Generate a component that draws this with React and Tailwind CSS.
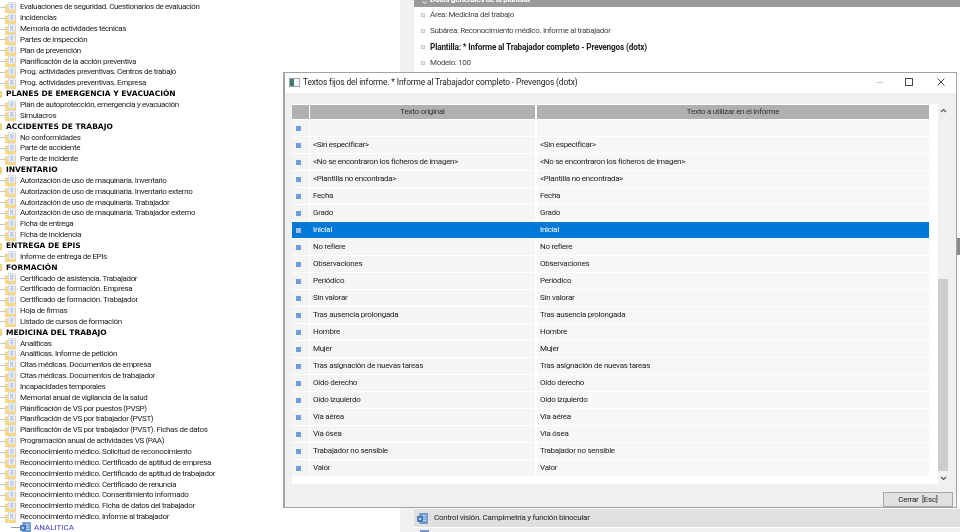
import React from 'react';

// h = section heading, everything else is a report leaf
const treeRows = [
  'Evaluaciones de seguridad. Cuestionarios de evaluación',
  'Incidencias',
  'Memoria de actividades técnicas',
  'Partes de inspección',
  'Plan de prevención',
  'Planificación de la acción preventiva',
  'Prog. actividades preventivas. Centros de trabajo',
  'Prog. actividades preventivas. Empresa',
  { h: 'PLANES DE EMERGENCIA Y EVACUACIÓN' },
  'Plan de autoprotección, emergencia y evacuación',
  'Simulacros',
  { h: 'ACCIDENTES DE TRABAJO' },
  'No conformidades',
  'Parte de accidente',
  'Parte de incidente',
  { h: 'INVENTARIO' },
  'Autorización de uso de maquinaria. Inventario',
  'Autorización de uso de maquinaria. Inventario externo',
  'Autorización de uso de maquinaria. Trabajador',
  'Autorización de uso de maquinaria. Trabajador externo',
  'Ficha de entrega',
  'Ficha de incidencia',
  { h: 'ENTREGA DE EPIS' },
  'Informe de entrega de EPIs',
  { h: 'FORMACIÓN' },
  'Certificado de asistencia. Trabajador',
  'Certificado de formación. Empresa',
  'Certificado de formación. Trabajador',
  'Hoja de firmas',
  'Listado de cursos de formación',
  { h: 'MEDICINA DEL TRABAJO' },
  'Analíticas',
  'Analíticas. Informe de petición',
  'Citas médicas. Documentos de empresa',
  'Citas médicas. Documentos de trabajador',
  'Incapacidades temporales',
  'Memorial anual de vigilancia de la salud',
  'Planificación de VS por puestos (PVSP)',
  'Planificación de VS por trabajador (PVST)',
  'Planificación de VS por trabajador (PVST). Fichas de datos',
  'Programación anual de actividades VS (PAA)',
  'Reconocimiento médico. Solicitud de reconocimiento',
  'Reconocimiento médico. Certificado de aptitud de empresa',
  'Reconocimiento médico. Certificado de aptitud de trabajador',
  'Reconocimiento médico. Certificado de renuncia',
  'Reconocimiento médico. Consentimiento informado',
  'Reconocimiento médico. Ficha de datos del trabajador',
  'Reconocimiento médico. Informe al trabajador',
];

const textRows = [
  '',
  '<Sin especificar>',
  '<No se encontraron los ficheros de imagen>',
  '<Plantilla no encontrada>',
  'Fecha',
  'Grado',
  'Inicial',
  'No refiere',
  'Observaciones',
  'Periódico',
  'Sin valorar',
  'Tras ausencia prolongada',
  'Hombre',
  'Mujer',
  'Tras asignación de nuevas tareas',
  'Oído derecho',
  'Oído izquierdo',
  'Vía aérea',
  'Vía ósea',
  'Trabajador no sensible',
  'Valor',
];

const FolderIcon = () => (
  <svg width="11" height="11" viewBox="0 0 11 11" className="shrink-0">
    <path d="M0 3h3l1-1h7v9H0z" fill="#f5dc94" stroke="#e2c070" strokeWidth="0.6" />
    <rect x="3.5" y="0.5" width="6.5" height="7.5" fill="#f3f6fc" stroke="#c9d3ea" strokeWidth="0.6" />
    <path d="M5 2.5h3.5M5 4.2h3.5M5 5.9h3.5M5.9 1.6v5.2M7.6 1.6v5.2" stroke="#a3b7e6" strokeWidth="0.6" />
    <path d="M0 8h11v3H0z" fill="#f5d986" />
  </svg>
);

const ReportIcon = ({ size = 11 }) => (
  <svg width={size} height={size} viewBox="0 0 12 12" className="shrink-0">
    <rect x="3" y="0.5" width="8.5" height="11" fill="#6f9cd6" stroke="#4a7cbc" strokeWidth="0.6" />
    <path d="M6 3h4M6 5.5h4M6 8h4" stroke="#e3edf9" strokeWidth="0.9" />
    <rect x="0.5" y="4" width="5.5" height="5" fill="#3f78bf" stroke="#2f5f9f" strokeWidth="0.6" />
    <rect x="2" y="5.5" width="2.5" height="2" fill="#cfe0f5" />
  </svg>
);

const TreeRow = ({ row }) => {
  if (row.h) {
    return (
      <div className="relative flex h-[10.854px] items-center pl-[6px]">
        <span className="absolute left-0 top-[2px] h-[7px] w-[2px] bg-[#f0d27c]" />
        <span className="whitespace-nowrap font-['DejaVu_Sans'] text-[7.5px] font-bold tracking-normal text-black">{row.h}</span>
      </div>
    );
  }
  return (
    <div className="flex h-[10.854px] items-center">
      <span className="h-px w-[5px] shrink-0 bg-[#c4c4c4]" />
      <FolderIcon />
      <span className="ml-[4px] whitespace-nowrap text-[8px] tracking-[-0.36px] text-[#222]">{row}</span>
    </div>
  );
};

const Bullet = ({ children, bold }) => (
  <div className="flex h-[16px] items-center">
    <span className="h-[4px] w-[4px] shrink-0 border border-[#c8c8c8] bg-[#eeeeee]" />
    <span className={bold ? 'ml-[5px] text-[8.2px] font-bold tracking-[-0.15px] text-[#222]' : 'ml-[5px] text-[8px] tracking-[-0.33px] text-[#444]'}>{children}</span>
  </div>
);

const GridRow = ({ text, selected }) => (
  <div className={selected ? 'flex h-[16px] w-[637px] bg-[#0078d7] text-white' : 'flex h-[16px] w-[637px] text-[#222]'}>
    <div className={selected ? 'flex w-[17px] items-center pl-[4px]' : 'flex w-[17px] items-center bg-[#f3f3f3] pl-[4px]'}>
      <span className={selected ? 'h-[5px] w-[5px] bg-[#a9bfdd]' : 'h-[5px] w-[5px] bg-[#6f9fd8]'} />
    </div>
    <div className={selected ? 'ml-px flex w-[225px] items-center pl-[3px]' : 'ml-px flex w-[225px] items-center bg-[#f5f5f5] pl-[3px]'}>{text}</div>
    <div className={selected ? 'ml-[2px] flex w-[392px] items-center pl-[3px]' : 'ml-[2px] flex w-[392px] items-center bg-[#f7f7f7] pl-[3px]'}>{text}</div>
  </div>
);

const TextsDialog = () => (
  <div className="absolute left-[283px] top-[72px] flex h-[436px] w-[674px] flex-col border border-l-[2px] border-[#a3a3a3] bg-[#f0f0f0]">
    <div className="flex h-[20px] shrink-0 items-center bg-white pb-[2px] pl-[4px] text-[#222]">
      <svg width="11" height="9" viewBox="0 0 11 9" className="shrink-0">
        <rect x="0.5" y="0.5" width="10" height="8" fill="#f4f6fa" stroke="#9aa3b0" />
        <rect x="1" y="1" width="4" height="7" fill="#3f7d6f" />
      </svg>
      <span className="ml-[3px] text-[8.4px] tracking-[-0.13px]">Textos fijos del informe. * Informe al Trabajador completo - Prevengos (dotx)</span>
      <div className="ml-auto flex items-center">
        <span className="h-px w-[7px] bg-[#cccccc]" />
        <span className="ml-[22px] h-[8px] w-[8px] border border-[#444]" />
        <svg width="8" height="8" viewBox="0 0 8 8" className="ml-[24px] mr-[11px]">
          <path d="M0.5 0.5l7 7M7.5 0.5l-7 7" stroke="#444" strokeWidth="1" fill="none" />
        </svg>
      </div>
    </div>

    <div className="flex h-[391px] pl-[7px] pt-[11px]">
      <div className="flex w-[646px] flex-col bg-white pt-px">
        <div className="flex h-[14px] w-[637px] shrink-0 text-[#333]">
          <div className="w-[17px] bg-[#b0b0b0]" />
          <div className="ml-px flex w-[225px] items-center justify-center bg-[#b0b0b0]">Texto original</div>
          <div className="ml-[2px] flex w-[392px] items-center justify-center bg-[#b0b0b0]">Texto a utilizar en el informe</div>
        </div>
        <div className="mt-px flex flex-col gap-px">
          {textRows.map((text, i) => (
            <GridRow key={i} text={text} selected={text === 'Inicial'} />
          ))}
        </div>
      </div>
      <div className="flex w-[10px] flex-col items-center">
        <svg width="7" height="5" viewBox="0 0 7 5" className="mt-[4px] shrink-0">
          <path d="M1 4l2.5-2.5L6 4" stroke="#555" strokeWidth="1.2" fill="none" />
        </svg>
        <div className="mb-[5px] mt-auto h-[192px] w-full bg-[#cdcdcd]" />
        <svg width="7" height="5" viewBox="0 0 7 5" className="mb-[3px] shrink-0">
          <path d="M1 1l2.5 2.5L6 1" stroke="#555" strokeWidth="1.2" fill="none" />
        </svg>
      </div>
    </div>

    <div className="flex justify-end pr-[3px] pt-[8px]">
      <button className="flex h-[15px] w-[70px] items-center justify-center border border-[#a8a8a8] bg-[#e1e1e1] text-[#222]">
        Cerrar&nbsp;&nbsp;[Esc]
      </button>
    </div>
  </div>
);

export default function App() {
  return (
    <div className="relative h-[532px] w-[960px] overflow-hidden bg-white font-['Roboto',sans-serif] text-[8px] leading-none tracking-[-0.27px] blur-[0.35px]">
      <div className="flex h-full">
        <div className="relative w-[400px] shrink-0 pt-[2px]">
          {treeRows.map((row, i) => (
            <TreeRow key={i} row={row} />
          ))}
          <div className="flex h-[10.854px] items-center pl-[11px]">
            <span className="h-px w-[9px] shrink-0 bg-[#9a9a9a]" />
            <ReportIcon />
            <span className="ml-[3px] text-[8px] tracking-normal text-[#3a3acb]">ANALITICA</span>
          </div>
        </div>

        <div className="w-[14px] shrink-0 bg-[#f0f0f0]" />

        <div className="flex min-w-0 flex-1 flex-col">
          <div className="flex h-[7px] shrink-0 items-start overflow-hidden bg-[#9a9a9a] pl-[8px] font-bold text-white">
            <svg width="5" height="4" viewBox="0 0 5 4" className="mt-px shrink-0">
              <path d="M0.5 0.5l2 2 2-2" stroke="#fff" strokeWidth="1" fill="none" />
            </svg>
            <div className="-mt-[4px] ml-[3px]">Datos generales de la plantilla</div>
          </div>
          <div className="flex flex-col pl-[7px]">
            <Bullet>Área: Medicina del trabajo</Bullet>
            <Bullet>Subárea: Reconocimiento médico. Informe al trabajador</Bullet>
            <Bullet bold>Plantilla: * Informe al Trabajador completo - Prevengos (dotx)</Bullet>
            <Bullet>Modelo: 100</Bullet>
          </div>
          <div className="flex-1" />
          <div className="flex h-[19px] shrink-0 items-center border-b border-white bg-[#e0e0e0] pl-[3px] text-[#222]">
            <ReportIcon />
            <span className="ml-[6px]">Control visión. Campimetría y función binocular</span>
          </div>
          <div className="h-[4px] shrink-0 bg-[#f0f0f0] pl-[6px] pt-[2px]">
            <span className="block h-[2px] w-[9px] bg-[#6f9cd6]" />
          </div>
        </div>
      </div>

      <span className="absolute right-0 top-[238px] h-[17px] w-[3px] bg-[#8a8a8a]" />
      <TextsDialog />
    </div>
  );
}
